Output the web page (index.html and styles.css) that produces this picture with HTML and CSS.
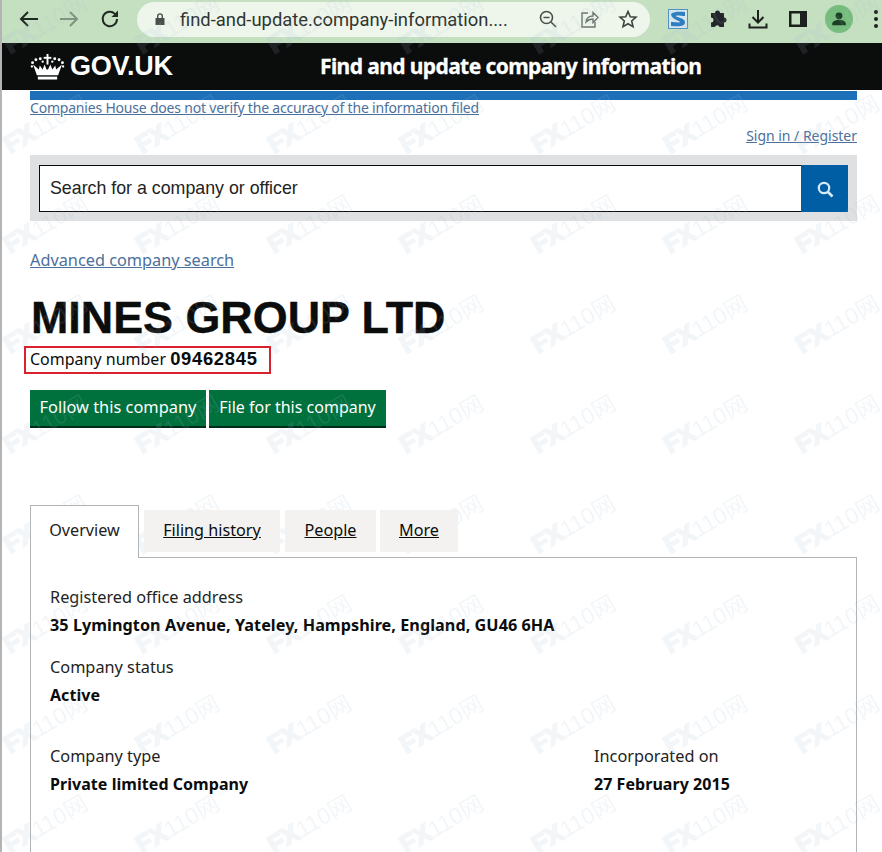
FILE: index.html
```html
<!DOCTYPE html>
<html lang="en">
<head>
<meta charset="utf-8">
<title>MINES GROUP LTD</title>
<link rel="stylesheet" href="styles.css">
</head>
<body>
<div class="toolbar">
  <svg class="tb-icon" viewBox="0 0 24 24"><path d="M21 12H4M11 5l-7 7 7 7" fill="none" stroke="#1f2a22" stroke-width="2"/></svg>
  <svg class="tb-icon fwd" viewBox="0 0 24 24"><path d="M3 12h17M13 5l7 7-7 7" fill="none" stroke="#7f9381" stroke-width="2"/></svg>
  <svg class="tb-icon reload" viewBox="0 0 24 24"><path d="M19 12a7.2 7.2 0 1 1-2.1-5.1" fill="none" stroke="#1f2a22" stroke-width="2"/><path d="M20 3.5V10h-6.5z" fill="#1f2a22"/></svg>
  <div class="omnibox">
    <svg class="lock" viewBox="0 0 12 14"><path d="M3 6V4.2a3 3 0 0 1 6 0V6h1.500v7h-9V6zM4.400 6h3.200V4.200a1.600 1.600 0 0 0-3.200 0z" fill="#4a4f4b"/></svg>
    <span class="url">find-and-update.company-information....</span>
    <svg class="om-icon zoomout" viewBox="0 0 20 20"><circle cx="8.500" cy="8.500" r="6" fill="none" stroke="#4a4f4b" stroke-width="1.600"/><path d="M13 13l5 5M5.500 8.500h6" stroke="#4a4f4b" stroke-width="1.600"/></svg>
    <svg class="om-icon share" viewBox="0 0 20 20"><path d="M9 4H3v14h13v-5M7 13c.5-4 3-6 7-6V3.500l5 5-5 5V10c-3 0-5 1-7 3z" fill="none" stroke="#6c746e" stroke-width="1.400"/></svg>
    <svg class="om-icon star" viewBox="0 0 20 20"><path d="M10 2.500l2.300 5.200 5.700.5-4.300 3.800 1.300 5.600L10 14.700l-5 2.900 1.300-5.600L2 8.200l5.700-.5z" fill="none" stroke="#3c4340" stroke-width="1.600"/></svg>
  </div>
  <div class="ext-group">
    <svg class="ext-s" viewBox="0 0 20 20"><rect x=".5" y=".5" width="19" height="19" fill="#d5e6ee" stroke="#4f93c4"/><path d="M3 5c4-3 9-2 14-2v4c-4 0-8-1-9 0s9 2 9 6-4 5-14 4v-4c4 0 9 1 9 0S3 10 3 5z" fill="#2e7ec0"/></svg>
    <svg class="ext-icon puzzle" viewBox="0 0 20 20"><path d="M7 4a2.500 2.500 0 0 1 5 0h4v4.500a2.500 2.500 0 0 1 0 5V18h-4.500a2.300 2.300 0 0 0-4.500 0H3v-4.500a2.500 2.500 0 0 0 0-5V4z" fill="#22252a"/></svg>
    <svg class="ext-icon download" viewBox="0 0 20 20"><path d="M10 1v12M4.500 8l5.500 5.500L15.500 8M1.500 14.500V18.500h17v-4" fill="none" stroke="#1d211e" stroke-width="2"/></svg>
    <svg class="ext-icon panel-icon" viewBox="0 0 20 20"><path d="M1 2h18v16H1zM3.500 4.500v11H12v-11z" fill="#1d211e" fill-rule="evenodd"/></svg>
    <div class="avatar"><svg viewBox="0 0 20 20"><circle cx="10" cy="6.500" r="3.800" fill="#1c3d25"/><path d="M2.500 17v-2c0-3 5-4.300 7.500-4.300s7.500 1.300 7.500 4.300v2z" fill="#1c3d25"/></svg></div>
    <div class="kebab"><i></i><i></i><i></i></div>
  </div>
</div>

<header class="gov-header">
  <div class="logo">
    <svg class="crown" viewBox="0 0 36 28"><g fill="#fff"><path d="M7 23h22l4-11-6 5-1-4-3 4-2-5-2.500 5H17L15 12l-2 5-3-4-1 4-6-5z"/><rect x="8" y="24.500" width="20" height="3"/><rect x="17" y="1" width="2" height="11"/><rect x="14" y="4" width="8" height="2"/><circle cx="10.500" cy="6" r="1.500"/><circle cx="25.500" cy="6" r="1.500"/><circle cx="13" cy="9" r="1.200"/><circle cx="23" cy="9" r="1.200"/><circle cx="6" cy="7" r="1.500"/><circle cx="30" cy="7" r="1.500"/><circle cx="2.500" cy="10" r="1.500"/><circle cx="33.500" cy="10" r="1.500"/><circle cx="1.800" cy="14" r="1.200"/><circle cx="34.200" cy="14" r="1.200"/></g></svg>
    <span class="logo-text">GOV.UK</span>
  </div>
  <span class="service-name">Find and update company information</span>
</header>

<main class="main">
  <div class="blue-bar"></div>
  <a class="link notice" href="#">Companies House does not verify the accuracy of the information filed</a>
  <div class="signin-row"><a class="link signin" href="#">Sign in / Register</a></div>
  <form class="search">
    <div class="search-input">Search for a company or officer</div>
    <div class="search-btn"><svg viewBox="0 0 18 18"><circle cx="8" cy="8" r="5.200" fill="none" stroke="#d5eaf7" stroke-width="2.200"/><path d="M12 12l4.500 4.500" stroke="#d5eaf7" stroke-width="2.600"/></svg></div>
  </form>
  <a class="link advanced" href="#">Advanced company search</a>
  <h1 class="title">MINES GROUP LTD</h1>
  <p class="number"><span class="number-inner">Company number <strong>09462845</strong></span></p>
  <div class="actions">
    <a class="btn btn-follow" href="#">Follow this company</a>
    <a class="btn btn-file" href="#">File for this company</a>
  </div>
  <nav class="tabs">
    <span class="tab active">Overview</span>
    <a class="tab tab-filing" href="#">Filing history</a>
    <a class="tab tab-people" href="#">People</a>
    <a class="tab tab-more" href="#">More</a>
  </nav>
  <section class="panel">
    <dl class="field">
      <dt>Registered office address</dt>
      <dd class="dd-address">35 Lymington Avenue, Yateley, Hampshire, England, GU46 6HA</dd>
    </dl>
    <dl class="field field-status">
      <dt>Company status</dt>
      <dd>Active</dd>
    </dl>
    <div class="field-row">
      <dl class="field col-type">
        <dt>Company type</dt>
        <dd>Private limited Company</dd>
      </dl>
      <dl class="field">
        <dt>Incorporated on</dt>
        <dd>27 February 2015</dd>
      </dl>
    </div>
  </section>
</main>

<svg class="watermark" width="882" height="852" aria-hidden="true">
  <defs>
    <pattern id="wm" x="0" y="-14" width="132" height="100" patternUnits="userSpaceOnUse">
      <g class="wm-group" transform="translate(10 68) rotate(-30)">
        <text class="wm-text"><tspan class="wm-fx">FX</tspan>110网</text>
      </g>
    </pattern>
  </defs>
  <rect width="882" height="852" fill="url(#wm)"/>
</svg>
</body>
</html>
```

FILE: styles.css
```css
*, *::before { box-sizing: border-box; }
html, body { margin: 0; padding: 0; height: 852px; overflow: hidden; background: #fff; }
body {
  position: relative;
  border-left: 2px solid #b4b4b4;
  font-family: "Noto Sans", "Liberation Sans", sans-serif;
  color: #0b0c0c;
}
.toolbar {
  height: 43px;
  background: #c5dfc1;
  display: flex;
  align-items: center;
  padding-bottom: 5px;
  position: relative;
}
.tb-icon { width: 24px; height: 24px; margin-left: 15px; flex: none; }
.tb-icon.fwd { margin-left: 16px; }
.tb-icon.reload { margin-left: 17px; }
.omnibox {
  margin-left: 15px;
  width: 513px;
  height: 35px;
  border-radius: 18px;
  background: #eef6ec;
  display: flex;
  align-items: center;
  padding-left: 17px;
  flex: none;
}
.lock { width: 12px; height: 14px; flex: none; }
.url { margin-left: 14px; font: 18.4px Roboto, sans-serif; color: #2f3431; white-space: nowrap; width: 339px; flex: none; }
.om-icon { width: 20px; height: 20px; flex: none; }
.zoomout { margin-left: 19px; }
.share { margin-left: 21px; }
.star { margin-left: 19px; }
.ext-group { display: flex; align-items: center; margin-left: 18px; }
.ext-s { width: 20px; height: 20px; flex: none; }
.ext-icon { width: 20px; height: 20px; flex: none; }
.puzzle { margin-left: 20px; }
.download { margin-left: 20px; }
.panel-icon { margin-left: 20px; }
.avatar { width: 28px; height: 28px; border-radius: 50%; background: #76bd7d; margin-left: 17px; padding: 5px; display: flex; }
.kebab { margin-left: 21px; display: flex; flex-direction: column; gap: 3px; }
.kebab i { width: 4px; height: 4px; border-radius: 50%; background: #1d211e; display: block; }

.gov-header {
  height: 47px;
  background: #0b0c0c;
  color: #fff;
  display: flex;
  align-items: center;
  padding-left: 28px;
  padding-bottom: 2px;
}
.logo { display: flex; align-items: center; width: 290px; margin-top: 2px; }
.crown { width: 35px; height: 27px; flex: none; }
.logo-text { margin-left: 5px; font: 700 27px "Liberation Sans", Arial, sans-serif; letter-spacing: -.2px; }
.service-name { font-weight: 700; font-size: 21px; white-space: nowrap; letter-spacing: -.6px; -webkit-text-stroke: .3px #fff; }

.main { padding: 1px 25px 0 28px; }
.blue-bar { height: 9px; background: #1d70b8; }
.link { color: #4c6f9b; text-decoration: underline; }
.notice { display: block; font-size: 14px; line-height: 17px; margin-top: -1px; letter-spacing: -.2px; }
.signin-row { display: flex; justify-content: flex-end; margin-top: 10px; height: 19px; }
.signin { font-size: 14px; line-height: 19px; letter-spacing: -.02px; }
.search {
  margin-top: 10px;
  height: 66px;
  background: #dee0e2;
  padding: 10px 9px;
  display: flex;
}
.search-input {
  flex: 1;
  height: 47px;
  background: #fff;
  border: 1px solid #0b0c0c;
  padding-left: 10px;
  font: 17.8px/44px "Liberation Sans", Arial, sans-serif;
  color: #222;
}
.search-btn { width: 47px; height: 47px; background: #005ea5; display: flex; align-items: center; justify-content: center; margin-left: -1px; }
.search-btn svg { width: 18px; height: 18px; }
.advanced { display: block; margin-top: 28px; font-size: 16.3px; line-height: 22px; width: max-content; }
.title { margin: 22px 0 0; font: 700 44.85px/50px "Liberation Sans", Arial, sans-serif; padding-left: 1px; -webkit-text-stroke: .4px #0b0c0c; }
.number { margin: 5px 0 0; font-size: 16px; line-height: 22px; height: 22px; }
.number-inner { display: inline-block; position: relative; white-space: nowrap; }
.number-inner::before { content: ""; position: absolute; left: -6px; top: -2px; width: 247px; height: 28px; border: 2px solid #d8232f; }
.number strong { font: 700 18.4px/20px "Liberation Sans", Arial, sans-serif; letter-spacing: .7px; }
.actions { display: flex; margin-top: 20px; gap: 3px; }
.btn {
  display: block;
  height: 38px;
  background: #00703c;
  box-shadow: inset 0 -2px 0 #002d18;
  color: #fff;
  text-decoration: none;
  font-size: 16.4px;
  line-height: 34px;
  text-align: center;
  white-space: nowrap;
}
.btn-follow { width: 176px; }
.btn-file { width: 177px; font-size: 16px; }
.tabs { display: flex; align-items: flex-start; margin-top: 77px; height: 53px; position: relative; z-index: 1; }
.tab { display: block; font-size: 16.2px; color: #0b0c0c; text-align: center; white-space: nowrap; }
.tab.active { width: 109px; height: 53px; background: #fff; border: 1px solid #b1b4b6; border-bottom: 0; line-height: 49px; color: #222; }
.tab-filing, .tab-people, .tab-more { height: 42px; margin-top: 5px; background: #f3f2f1; line-height: 40px; }
.tab-filing { width: 136px; margin-left: 5px; }
.tab-people { width: 91px; margin-left: 5px; }
.tab-more { width: 78px; margin-left: 4px; }
.panel { border: 1px solid #b1b4b6; margin-top: -1px; height: 320px; padding: 28px 19px 0; }
dl, dt, dd { margin: 0; }
dt { font-size: 16.3px; line-height: 22px; color: #222; }
dd { font-size: 16px; font-weight: 700; line-height: 22px; margin-top: 6px; white-space: nowrap; letter-spacing: .05px; }
.dd-address { font-size: 16.2px; }
.field-status { margin-top: 20px; }
.field-row { display: flex; margin-top: 39px; }
.col-type { width: 544px; }

.watermark { position: absolute; left: -2px; top: 0; pointer-events: none; }
.wm-group { opacity: .13; }
.wm-text { font: 23px "Liberation Sans", "Noto Sans CJK SC", sans-serif; fill: #9fb8cc; }
.wm-fx { font-weight: 700; font-size: 25px; stroke: #9fb8cc; stroke-width: 2px; }
```
